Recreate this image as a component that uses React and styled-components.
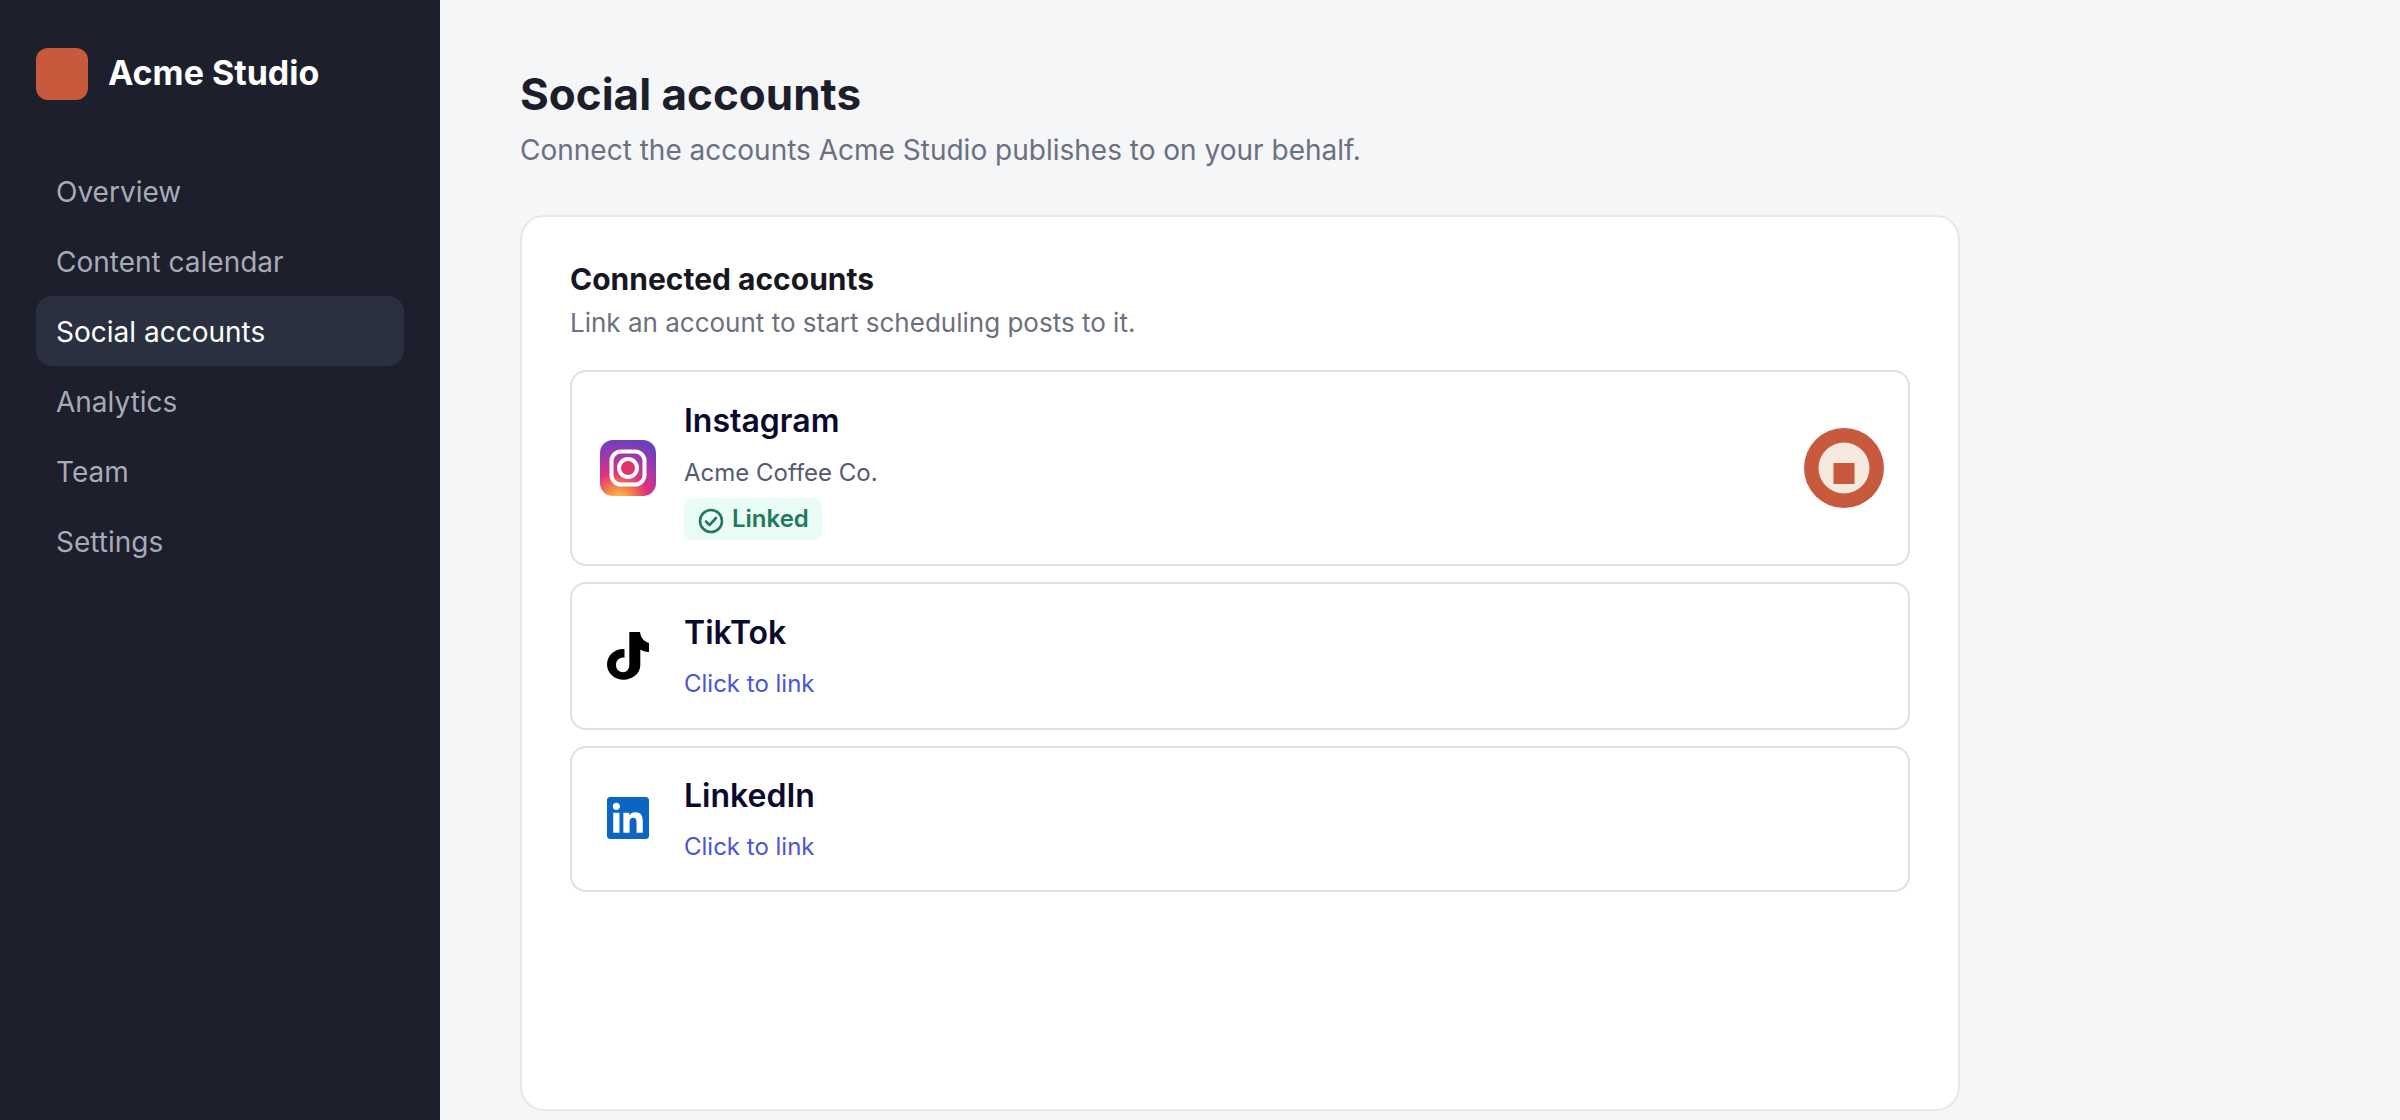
import React from "react";
import styled, { createGlobalStyle } from "styled-components";
import { SiLinkedin } from "react-icons/si";

const Global = createGlobalStyle`
  html, body { margin: 0; padding: 0; height: 100%; }
  body { font-family: Inter, "Liberation Sans", sans-serif; background: #f5f6f8; overflow: hidden; }
  * { box-sizing: border-box; }
`;

const Shell = styled.div`
  display: flex;
  width: 2400px;
  height: 1120px;
  overflow: hidden;
`;
const Sidebar = styled.aside`
  width: 440px;
  flex: none;
  background: #1d1f2c;
  padding: 48px 36px;
  display: flex;
  flex-direction: column;
  gap: 56px;
`;
const Brand = styled.div`
  display: flex;
  align-items: center;
  gap: 20px;
`;
const BrandMark = styled.div`
  width: 52px;
  height: 52px;
  border-radius: 12px;
  background: #c8593c;
`;
const BrandName = styled.div`
  padding-bottom: 3px;
  font-size: 34px;
  font-weight: 700;
  color: #fff;
`;
const Nav = styled.nav`
  display: flex;
  flex-direction: column;
`;
const NavItem = styled.a`
  display: flex;
  align-items: center;
  height: 70px;
  padding: 2px 20px 0;
  border-radius: 16px;
  font-size: 28px;
  color: ${(p) => (p.$active ? "#ffffff" : "#a6abb8")};
  background: ${(p) => (p.$active ? "#2a3040" : "transparent")};
`;
const Main = styled.main`
  flex: 1;
  padding: 68px 80px 0;
`;
const PageTitle = styled.h1`
  margin: 0;
  font-size: 44px;
  line-height: 52px;
  font-weight: 700;
  color: #1c1f2b;
`;
const PageSub = styled.p`
  margin: 13px 0 0;
  font-size: 28px;
  line-height: 34px;
  color: #6b7080;
`;
const Card = styled.section`
  margin-top: 48px;
  width: 1440px;
  height: 896px;
  background: #fff;
  border: 2px solid #e6e7eb;
  border-radius: 24px;
  padding: 44px 48px;
`;
const CardTitle = styled.h2`
  margin: 0;
  font-size: 30px;
  line-height: 36px;
  font-weight: 700;
  color: #17181f;
`;
const CardSub = styled.p`
  margin: 10px 0 0;
  font-size: 26px;
  line-height: 32px;
  color: #6b7080;
`;
const List = styled.div`
  margin-top: 31px;
  display: flex;
  flex-direction: column;
  gap: 16px;
`;
const Row = styled.div`
  display: flex;
  align-items: center;
  height: ${(p) => p.$h}px;
  padding: 0 24px 0 28px;
  border: 2px solid #dfe0e5;
  border-radius: 16px;
`;
const LogoBox = styled.div`
  width: 56px;
  height: 56px;
  flex: none;
  display: flex;
  align-items: center;
  justify-content: center;
  padding-bottom: ${(p) => p.$lift || 0}px;
  color: ${(p) => p.$color || "#000"};
`;
const Info = styled.div`
  margin-left: 28px;
  padding-top: ${(p) => p.$top}px;
  flex: 1;
  display: flex;
  flex-direction: column;
  align-items: flex-start;
`;
const Name = styled.div`
  margin-top: -1px;
  font-size: 32px;
  line-height: 40px;
  font-weight: 600;
  color: #0a0a2e;
`;
const Handle = styled.div`
  margin-top: 16px;
  font-size: 24px;
  line-height: 32px;
  color: #565a70;
`;
const LinkText = styled.a`
  margin-top: 15px;
  font-size: 24px;
  line-height: 32px;
  color: #4a55d4;
`;
const Badge = styled.div`
  margin-top: 9px;
  height: 42px;
  width: 138px;
  padding: 0 0 0 14px;
  display: flex;
  align-items: center;
  gap: 8px;
  background: #e9fcf5;
  border-radius: 8px;
  font-size: 24px;
  font-weight: 600;
  color: #217a5b;
  svg {
    margin-top: 3px;
  }
`;
const BadgeLabel = styled.span`
  margin-bottom: 2px;
`;
const StopButton = styled.button`
  width: 80px;
  height: 80px;
  padding: 0;
  border: 0;
  background: none;
  flex: none;
  display: block;
`;

const InstagramLogo = () => (
  <svg width="56" height="56" viewBox="0 0 56 56">
    <defs>
      <radialGradient id="igGlow" cx="33%" cy="110%" r="112%">
        <stop offset="0" stopColor="#fdd56c" />
        <stop offset="0.2" stopColor="#f7933f" />
        <stop offset="0.48" stopColor="#e0307e" />
        <stop offset="0.72" stopColor="#a838a8" />
        <stop offset="1" stopColor="#6b40bd" />
      </radialGradient>
    </defs>
    <rect width="56" height="56" rx="13" fill="url(#igGlow)" />
    <rect x="11.5" y="11.5" width="33" height="33" rx="9.5" fill="none" stroke="#fff" strokeWidth="4" />
    <circle cx="28" cy="28" r="9" fill="#e4336f" stroke="#fff" strokeWidth="4" />
  </svg>
);

const TikTokLogo = () => (
  <svg width="42" height="48" viewBox="0 0 42 48" fill="#000">
    <path d="M22.3 0H33C33.5 5 36.5 9.5 42 11V20C38 20 35.5 19 33.3 17.5V33C33.3 41.5 25.5 47.7 16.5 47.7C7.5 47.7 0 41 0 32.5C0 24 7 17 16 17L17.5 17.2V25.7C12.5 25 9 28.5 9 33C9 37.3 12.4 40.2 16 40.2C19.8 40.2 22.3 37.2 22.3 33Z" />
  </svg>
);

const CheckCircle = () => (
  <svg width="26" height="26" viewBox="0 0 26 26" fill="none" stroke="#217a5b" strokeWidth="2.6">
    <circle cx="13" cy="13" r="11" />
    <path d="M8 13.5l3.5 3.5 6.5-7" strokeLinecap="round" strokeLinejoin="round" />
  </svg>
);

const StopIcon = () => (
  <svg width="80" height="80" viewBox="0 0 80 80">
    <circle cx="40" cy="40" r="40" fill="#c8593c" />
    <circle cx="40" cy="40" r="25.5" fill="#f6e9dd" />
    <rect x="29.5" y="35" width="21" height="21" fill="#c8593c" />
  </svg>
);

const navItems = ["Overview", "Content calendar", "Social accounts", "Analytics", "Team", "Settings"];

export default function App() {
  return (
    <Shell>
      <Global />
      <Sidebar>
        <Brand>
          <BrandMark />
          <BrandName>Acme Studio</BrandName>
        </Brand>
        <Nav>
          {navItems.map((n) => (
            <NavItem key={n} $active={n === "Social accounts"}>{n}</NavItem>
          ))}
        </Nav>
      </Sidebar>
      <Main>
        <PageTitle>Social accounts</PageTitle>
        <PageSub>Connect the accounts Acme Studio publishes to on your behalf.</PageSub>
        <Card>
          <CardTitle>Connected accounts</CardTitle>
          <CardSub>Link an account to start scheduling posts to it.</CardSub>
          <List>
            <Row $h={196}>
              <LogoBox><InstagramLogo /></LogoBox>
              <Info $top={6}>
                <Name>Instagram</Name>
                <Handle>Acme Coffee Co.</Handle>
                <Badge><CheckCircle /><BadgeLabel>Linked</BadgeLabel></Badge>
              </Info>
              <StopButton aria-label="Stop"><StopIcon /></StopButton>
            </Row>
            <Row $h={148}>
              <LogoBox><TikTokLogo /></LogoBox>
              <Info $top={2}>
                <Name>TikTok</Name>
                <LinkText>Click to link</LinkText>
              </Info>
            </Row>
            <Row $h={146}>
              <LogoBox $color="#0a66c2" $lift={3}><SiLinkedin size={42} /></LogoBox>
              <Info $top={2}>
                <Name>LinkedIn</Name>
                <LinkText>Click to link</LinkText>
              </Info>
            </Row>
          </List>
        </Card>
      </Main>
    </Shell>
  );
}
